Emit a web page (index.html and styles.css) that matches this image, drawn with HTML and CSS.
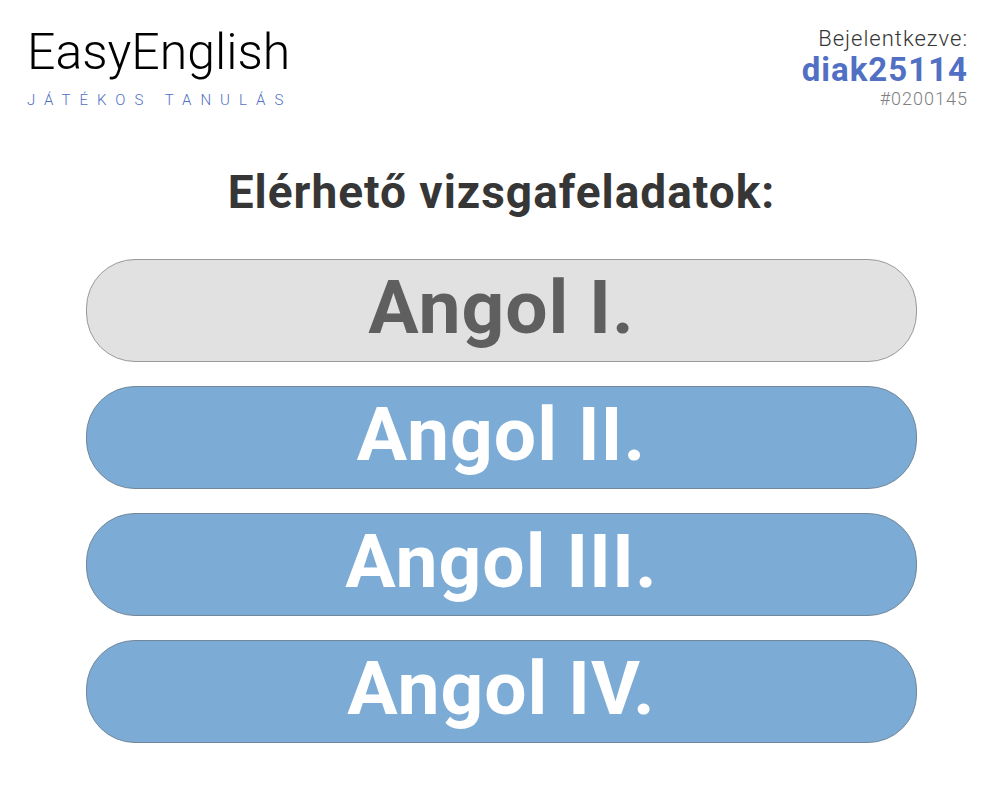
FILE: index.html
```html
<!DOCTYPE html>
<html lang="hu">
<head>
<meta charset="utf-8">
<meta name="viewport" content="width=device-width, initial-scale=1">
<title>EasyEnglish – Játékos tanulás</title>
<link rel="stylesheet" href="styles.css">
</head>
<body>
<header class="header">
  <div class="brand">
    <div class="brand-name">EasyEnglish</div>
    <div class="brand-tagline">JÁTÉKOS TANULÁS</div>
  </div>
  <div class="account">
    <div class="account-label">Bejelentkezve:</div>
    <div class="account-name">diak25114</div>
    <div class="account-id">#0200145</div>
  </div>
</header>
<main class="main">
  <h1 class="title">Elérhető vizsgafeladatok:</h1>
  <div class="exams">
    <button class="exam" type="button" disabled>Angol I.</button>
    <button class="exam" type="button">Angol II.</button>
    <button class="exam" type="button">Angol III.</button>
    <button class="exam" type="button">Angol IV.</button>
  </div>
</main>
</body>
</html>
```
FILE: styles.css
```css
* {
  box-sizing: border-box;
}

body {
  margin: 0;
  background: #fff;
  color: #363636;
  font-family: Roboto, "Liberation Sans", sans-serif;
}

.header {
  display: flex;
  justify-content: space-between;
  align-items: flex-start;
  padding: 24px 32px 0 27px;
}

.brand-name {
  color: #000;
  font-size: 50px;
  font-weight: 300;
  line-height: 56px;
}

.brand-tagline {
  margin-top: 12px;
  color: #5170c4;
  font-size: 15px;
  font-weight: 300;
  line-height: 16px;
  letter-spacing: 9px;
}

.account {
  text-align: right;
}

.account-label {
  font-size: 22px;
  font-weight: 300;
  line-height: 30px;
  letter-spacing: 1px;
}

.account-name {
  color: #5170c4;
  font-size: 33px;
  font-weight: 700;
  line-height: 32px;
  letter-spacing: 1px;
}

.account-id {
  color: #808080;
  font-size: 18px;
  font-weight: 300;
  line-height: 26px;
  letter-spacing: 1px;
}

.main {
  padding: 52px 83px 64px 86px;
}

.title {
  margin: 0;
  font-size: 46px;
  font-weight: 700;
  line-height: 56px;
  letter-spacing: 1px;
  text-align: center;
}

.exams {
  display: grid;
  gap: 24px;
  margin-top: 39px;
}

.exam {
  width: 100%;
  padding: 0 0 6px;
  border: 1px solid #72879a;
  border-radius: 49px;
  background: #7cacd5;
  color: #fff;
  font-family: inherit;
  font-size: 75px;
  font-weight: 700;
  line-height: 95px;
  letter-spacing: 1px;
  cursor: pointer;
}

.exam:disabled {
  border-color: #999;
  background: #e1e1e1;
  color: #5f5f5f;
  cursor: default;
}
```
